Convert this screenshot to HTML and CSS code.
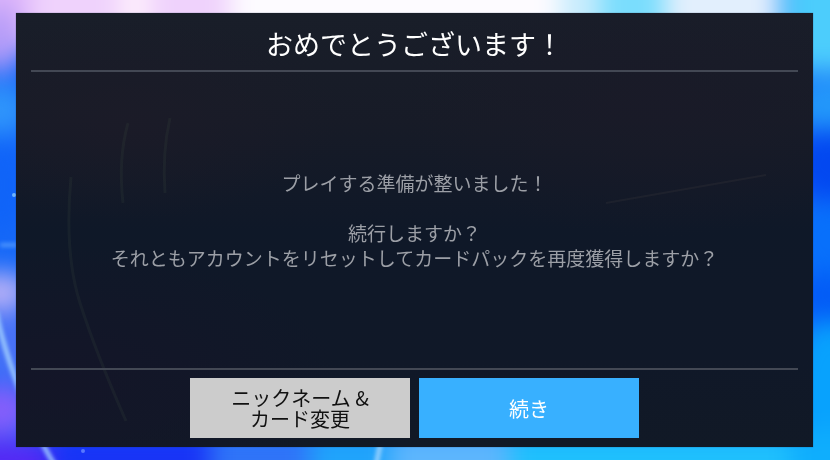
FILE: index.html
```
<!DOCTYPE html>
<html lang="ja">
<head>
    <meta charset="UTF-8">
    <meta name="viewport" content="width=device-width, initial-scale=1.0">
    <title>おめでとうございます！</title>
    <link rel="stylesheet" href="styles.css">
</head>
<body>
    <svg class="backdrop" viewBox="0 0 830 460" preserveAspectRatio="none" aria-hidden="true">
        <defs>
            <filter id="soft" x="-50%" y="-50%" width="200%" height="200%" color-interpolation-filters="sRGB">
                <feGaussianBlur stdDeviation="12"/>
            </filter>
            <filter id="glow" x="-50%" y="-50%" width="200%" height="200%" color-interpolation-filters="sRGB">
                <feGaussianBlur stdDeviation="2"/>
            </filter>
        </defs>
        <rect width="830" height="460" fill="#1769f8"/>
        <g filter="url(#soft)">
            <!-- top -->
            <rect x="-40" y="-40" width="180" height="90" fill="#dcb4fa"/>
            <ellipse cx="0" cy="40" rx="20" ry="34" fill="#b59cf8"/>
            <rect x="30" y="-40" width="220" height="90" fill="#efd2fc"/>
            <rect x="120" y="-40" width="30" height="90" fill="#fdeefc"/>
            <rect x="230" y="-40" width="350" height="90" fill="#fdfbff"/>
            <rect x="560" y="-40" width="50" height="90" fill="#c8ecfd"/>
            <rect x="600" y="-40" width="65" height="90" fill="#7addfd"/>
            <rect x="665" y="-40" width="115" height="90" fill="#e2effd"/>
            <rect x="785" y="-40" width="90" height="112" fill="#4ccdfc"/>
            <!-- left side -->
            <ellipse cx="0" cy="110" rx="30" ry="26" fill="#2f95fb"/>
            <ellipse cx="0" cy="185" rx="30" ry="50" fill="#1064f8"/>
            <ellipse cx="0" cy="292" rx="30" ry="20" fill="#b7b0f6"/>
            <ellipse cx="10" cy="345" rx="30" ry="34" fill="#4a72f6"/>
            <ellipse cx="0" cy="410" rx="34" ry="26" fill="#855efa"/>
            <!-- right side -->
            <ellipse cx="830" cy="105" rx="40" ry="26" fill="#2398fa"/>
            <ellipse cx="830" cy="165" rx="40" ry="36" fill="#0348f0"/>
            <ellipse cx="830" cy="240" rx="40" ry="40" fill="#0870fb"/>
            <ellipse cx="830" cy="298" rx="40" ry="26" fill="#035cf6"/>
            <ellipse cx="830" cy="390" rx="40" ry="70" fill="#08a2fd"/>
            <!-- bottom -->
            <rect x="-40" y="440" width="90" height="60" fill="#5528f4"/>
            <rect x="50" y="430" width="160" height="70" fill="#1834f6"/>
            <rect x="210" y="430" width="110" height="70" fill="#2f74f8"/>
            <rect x="310" y="430" width="80" height="70" fill="#20a4fb"/>
            <rect x="390" y="430" width="120" height="70" fill="#5db6fd"/>
            <rect x="510" y="430" width="290" height="70" fill="#1fc0fd"/>
            <rect x="790" y="430" width="80" height="70" fill="#0faefd"/>
        </g>
        <g fill="none" stroke="#a9d8ff" stroke-width="4" filter="url(#glow)">
            <path d="M-4 312Q6 360 32 420T66 472"/>
            <path d="M381 440L376 466"/>
            <path d="M0 245H18" stroke="#5fa4ff" stroke-width="3"/>
        </g>
        <circle cx="14" cy="195" r="2" fill="#6db4ff"/>
        <circle cx="83" cy="451" r="2" fill="#5878ff"/>
    </svg>

    <main class="dialog">
        <svg class="dialog-art" viewBox="0 0 797 434" preserveAspectRatio="none" aria-hidden="true">
            <g fill="none" stroke="#3c5040" stroke-opacity="0.18" stroke-width="3">
                <path d="M55 164Q48 240 64 290T110 408"/>
                <path d="M112 110Q102 145 107 190"/>
                <path d="M154 105Q146 140 149 180"/>
                <path d="M590 190L750 162" stroke="#50484a" stroke-width="2"/>
            </g>
        </svg>

        <h1 class="dialog-title">おめでとうございます！</h1>

        <div class="dialog-body">
            <p>プレイする準備が整いました！</p>
            <p>続行しますか？<br>それともアカウントをリセットしてカードパックを再度獲得しますか？</p>
        </div>

        <div class="dialog-actions">
            <button type="button" class="btn btn-secondary">ニックネーム &amp;<br>カード変更</button>
            <button type="button" class="btn btn-primary">続き</button>
        </div>
    </main>
</body>
</html>
```
FILE: styles.css
```
* {
    box-sizing: border-box;
}

body {
    display: flex;
    min-height: 100vh;
    margin: 0;
    padding: 13px 17px 13px 16px;
    background: #1769f8;
    font-family: "Noto Sans CJK JP", sans-serif;
}

.backdrop {
    position: fixed;
    inset: 0;
    width: 100%;
    height: 100%;
}

.dialog {
    position: relative;
    display: flex;
    flex: 1;
    flex-direction: column;
    padding: 0 15px;
    background:
        radial-gradient(ellipse at 14% 24%, rgba(28, 27, 40, 0.8), rgba(28, 27, 40, 0) 22%),
        radial-gradient(ellipse at 80% 20%, rgba(26, 26, 40, 0.8), rgba(26, 26, 40, 0) 28%),
        radial-gradient(ellipse at 6% 85%, rgba(20, 21, 40, 0.9), rgba(20, 21, 40, 0) 26%),
        linear-gradient(#191e29, #171b27 25%, #0f1828 50%, #101828 80%, #111926);
    box-shadow: 0 0 1px rgba(20, 40, 80, 0.6);
}

.dialog-art {
    position: absolute;
    inset: 0;
    width: 100%;
    height: 100%;
}

.dialog-title,
.dialog-body,
.dialog-actions {
    position: relative;
}

.dialog-title {
    margin: 0;
    padding: 11px 0 6px;
    border-bottom: 2px solid #434854;
    color: #fff;
    font-size: 27px;
    font-weight: 400;
    line-height: 40px;
    text-align: center;
}

.dialog-body {
    display: flex;
    flex: 1;
    flex-direction: column;
    justify-content: center;
    gap: 25px;
    color: #9c9fa6;
    font-size: 19px;
    line-height: 25px;
    text-align: center;
}

.dialog-body p {
    margin: 0;
}

.dialog-actions {
    display: flex;
    justify-content: center;
    gap: 9px;
    padding: 8px 0 9px;
    border-top: 2px solid #434854;
}

.btn {
    width: 220px;
    height: 60px;
    padding: 0;
    border: none;
    font-family: inherit;
    font-size: 20px;
    line-height: 21px;
    cursor: pointer;
}

.btn-secondary {
    background: #ccc;
    color: #111;
}

.btn-primary {
    background: #38b0ff;
    color: #fff;
}
```
